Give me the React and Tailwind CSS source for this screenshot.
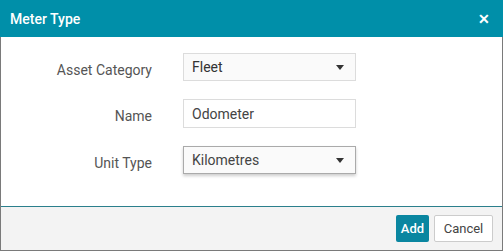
import { useState } from "react";

const Field = ({ label, children }) => (
  <div className="flex items-center">
    <div className="w-[151px] text-right pt-[6px] text-[14px] text-[#555]">{label}</div>
    <div className="ml-[31px]">{children}</div>
  </div>
);

const Caret = () => (
  <svg width="8" height="5" viewBox="0 0 8 5" className="absolute right-[11px] top-[11px]">
    <path d="M0 0 L8 0 L4 5 Z" fill="#333" />
  </svg>
);

const MeterType = () => {
  const [name, setName] = useState("Odometer");

  return (
    <div
      className="w-[503px] h-[251px] flex flex-col bg-white border-l border-r border-b border-[#7a7a7a]"
      style={{ fontFamily: "Roboto, 'Liberation Sans', sans-serif" }}
    >
      {/* Header */}
      <div className="h-[37px] bg-[#008fa9] flex items-center justify-between pl-[10px] pr-[13px] -mx-px">
        <span className="text-white text-[14px] font-medium pt-[1px]">Meter Type</span>
        <span className="text-white text-[14px] font-bold leading-none">✕</span>
      </div>

      {/* Body */}
      <div className="flex-1 flex flex-col gap-[18px] pt-[16px]">
        <Field label="Asset Category">
          <div className="relative w-[173px] h-[28px] border border-[#dcdcdc] bg-[#fafafa] pl-[8px] flex items-center text-[14px] text-[#333]">
            Fleet
            <Caret />
          </div>
        </Field>
        <Field label="Name">
          <input
            value={name}
            onChange={(e) => setName(e.target.value)}
            className="w-[173px] h-[29px] border border-[#dcdcdc] bg-white pl-[8px] text-[14px] text-[#444] outline-none"
          />
        </Field>
        <Field label="Unit Type">
          <div className="relative w-[173px] h-[28px] border border-[#aaa] bg-[#fafafa] pl-[8px] flex items-center text-[14px] text-[#444] shadow-[0_2px_3px_rgba(0,0,0,0.2)]">
            Kilometres
            <Caret />
          </div>
        </Field>
      </div>

      {/* Footer */}
      <div className="h-[44px] border-t border-[#2a7f8c] bg-[#f3f3f3] flex items-center justify-end gap-[5px] pr-[9px]">
        <button className="h-[27px] w-[33px] bg-[#0a86a0] text-white text-[13px] font-medium rounded-[2px]">
          Add
        </button>
        <button className="h-[27px] w-[59px] bg-white border border-[#ccc] text-[#444] text-[13px] rounded-[2px]">
          Cancel
        </button>
      </div>
    </div>
  );
};

export default function App() {
  return <MeterType />;
}
